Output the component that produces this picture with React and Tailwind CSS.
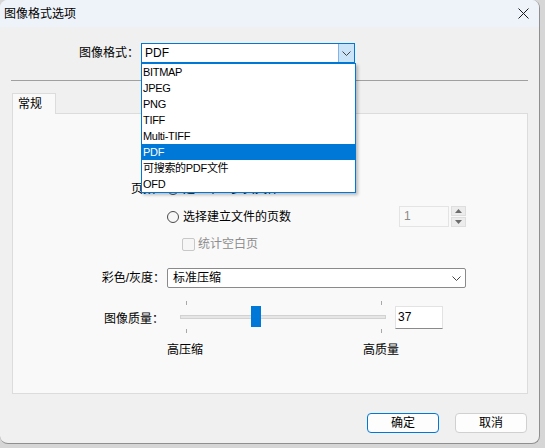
const font = { fontFamily: '"Liberation Sans", "Noto Sans CJK SC", sans-serif' };

const formats = ['BITMAP', 'JPEG', 'PNG', 'TIFF', 'Multi-TIFF', 'PDF', '可搜索的PDF文件', 'OFD'];

function Chevron({ className }) {
  return (
    <svg width="9" height="5" viewBox="0 0 9 5" className={className}>
      <polyline points="0.5,0.5 4.5,4.5 8.5,0.5" fill="none" stroke="#444" strokeWidth="1" />
    </svg>
  );
}

function Radio() {
  return <div className="w-[12px] h-[12px] rounded-full border border-[#4a4a4a] bg-[#f7f7f7] shrink-0" />;
}

export default function App() {
  return (
    <div className="w-[545px] h-[448px] bg-[#d6d6d6] text-[12px] text-black" style={font}>
      <div className="relative w-[540px] h-[444px] bg-[#f0f0f0] rounded-lg border-r border-b border-[#8f8f8f] overflow-hidden flex flex-col">
        {/* title bar */}
        <div className="h-[27px] shrink-0 bg-[#eef3fa] flex items-center justify-between pl-[4px] pr-[10px]">
          <span className="leading-[16px]">图像格式选项</span>
          <svg width="11" height="11" viewBox="0 0 11 11">
            <path d="M0.5 0.5 L10.5 10.5 M10.5 0.5 L0.5 10.5" stroke="#1a1a1a" strokeWidth="1" />
          </svg>
        </div>

        {/* format row */}
        <div className="mt-[16px] flex items-center h-[20px]">
          <div className="w-[141px] pr-[2px] text-right leading-[16px]">图像格式：</div>
          <div className="w-[214px] h-[20px] border border-[#0078d7] bg-white flex items-center">
            <span className="flex-1 pl-[3px] leading-[16px]">PDF</span>
            <div className="w-[16px] h-full bg-[#cce4f7] border-l border-[#7eb4ea] flex items-center justify-center">
              <Chevron />
            </div>
          </div>
        </div>

        <div className="mt-[17px] ml-[11px] w-[517px] h-px bg-[#a0a0a0]" />

        {/* tab */}
        <div className="mt-[12px] ml-[12px] w-[44px] h-[21px] -mb-px relative z-10 bg-[#f9f9f9] border-t border-l border-r border-[#dcdcdc] pl-[5px] leading-[20px]">
          常规
        </div>
        <div className="ml-[12px] w-[516px] h-[281px] border border-[#dcdcdc] bg-[#f9f9f9] flex flex-col">
          {/* pages row (mostly hidden) */}
          <div className="mt-[65px] h-[20px] flex items-center pl-[118px]">
            <span className="w-[36px] leading-[16px]">页数：</span>
            <Radio />
            <span className="ml-[4px] leading-[16px]">建立单一多页文件</span>
          </div>

          {/* radio + spinner */}
          <div className="mt-[7px] h-[21px] flex items-center justify-between pl-[154px] pr-[61px]">
            <div className="flex items-center">
              <Radio />
              <span className="ml-[4px] leading-[16px]">选择建立文件的页数</span>
            </div>
            <div className="flex items-center gap-[2px]">
              <div className="w-[50px] h-[21px] border border-[#e4e4e4] bg-[#f9f9f9] text-[#8a8a8a] pl-[4px] leading-[19px]">1</div>
              <div className="flex flex-col gap-[1px]">
                <div className="w-[15px] h-[10px] bg-[#ececec] border border-[#dedede] flex items-center justify-center">
                  <svg width="7" height="4" viewBox="0 0 7 4"><polygon points="0,4 7,4 3.5,0" fill="#6d6d6d" /></svg>
                </div>
                <div className="w-[15px] h-[10px] bg-[#ececec] border border-[#dedede] flex items-center justify-center">
                  <svg width="7" height="4" viewBox="0 0 7 4"><polygon points="0,0 7,0 3.5,4" fill="#6d6d6d" /></svg>
                </div>
              </div>
            </div>
          </div>

          {/* checkbox */}
          <div className="mt-[7px] h-[20px] flex items-center pl-[169px]">
            <div className="w-[13px] h-[13px] rounded-[2px] border border-[#c8c8c8] bg-[#f6f6f6]" />
            <span className="ml-[3px] text-[#8d8d8d] leading-[16px]">统计空白页</span>
          </div>

          {/* color select */}
          <div className="mt-[14px] h-[20px] flex items-center pl-[86px]">
            <span className="w-[66px] text-right leading-[16px]">彩色/灰度：</span>
            <div className="ml-[2px] w-[299px] h-[20px] bg-white border border-[#8a8a8a] rounded-[2px] flex items-center justify-between pl-[5px] pr-[4px]">
              <span className="leading-[16px]">标准压缩</span>
              <Chevron />
            </div>
          </div>

          {/* quality slider */}
          <div className="mt-[13px] h-[32px] flex items-start pl-[91px]">
            <span className="mt-[10px] w-[60px] leading-[16px]">图像质量：</span>
            <svg width="206" height="32" viewBox="0 0 206 32" className="ml-[16px]">
              <rect x="0.5" y="14.5" width="205" height="3" fill="#e6e6e6" stroke="#d2d2d2" />
              <line x1="6.5" y1="0" x2="6.5" y2="4" stroke="#a8a8a8" />
              <line x1="201.5" y1="0" x2="201.5" y2="4" stroke="#a8a8a8" />
              <line x1="6.5" y1="28" x2="6.5" y2="32" stroke="#a8a8a8" />
              <line x1="201.5" y1="28" x2="201.5" y2="32" stroke="#a8a8a8" />
              <rect x="71" y="5" width="10" height="21" fill="#0078d7" />
            </svg>
            <div className="mt-[5px] ml-[9px] w-[48px] h-[23px] bg-white border border-[#e3e3e3] border-b-[#8a8a8a] pl-[2px] leading-[20px]">37</div>
          </div>

          <div className="mt-[9px] h-[16px] flex items-center pl-[154px] leading-[16px]">
            <span>高压缩</span>
            <span className="ml-[160px]">高质量</span>
          </div>
        </div>

        {/* buttons */}
        <div className="mt-[19px] ml-[12px] w-[515px] flex justify-end gap-[16px]">
          <button className="w-[72px] h-[20px] rounded-[4px] border border-[#0078d7] bg-[#fdfdfd] leading-[16px]">确定</button>
          <button className="w-[72px] h-[20px] rounded-[4px] border border-[#d0d0d0] bg-[#fdfdfd] leading-[16px]">取消</button>
        </div>

        {/* open dropdown list */}
        <div className="absolute left-[141px] top-[63px] w-[215px] border border-[#0078d7] bg-white shadow-[2px_2px_3px_rgba(0,0,0,0.25)] z-20">
          {formats.map((f) => (
            <div
              key={f}
              className={
                'h-[16px] pl-[1px] text-[11px] tracking-[-0.3px] leading-[16px] ' +
                (f === 'PDF' ? 'bg-[#0078d7] text-white' : 'text-black')
              }
            >
              {f}
            </div>
          ))}
        </div>
      </div>
    </div>
  );
}
